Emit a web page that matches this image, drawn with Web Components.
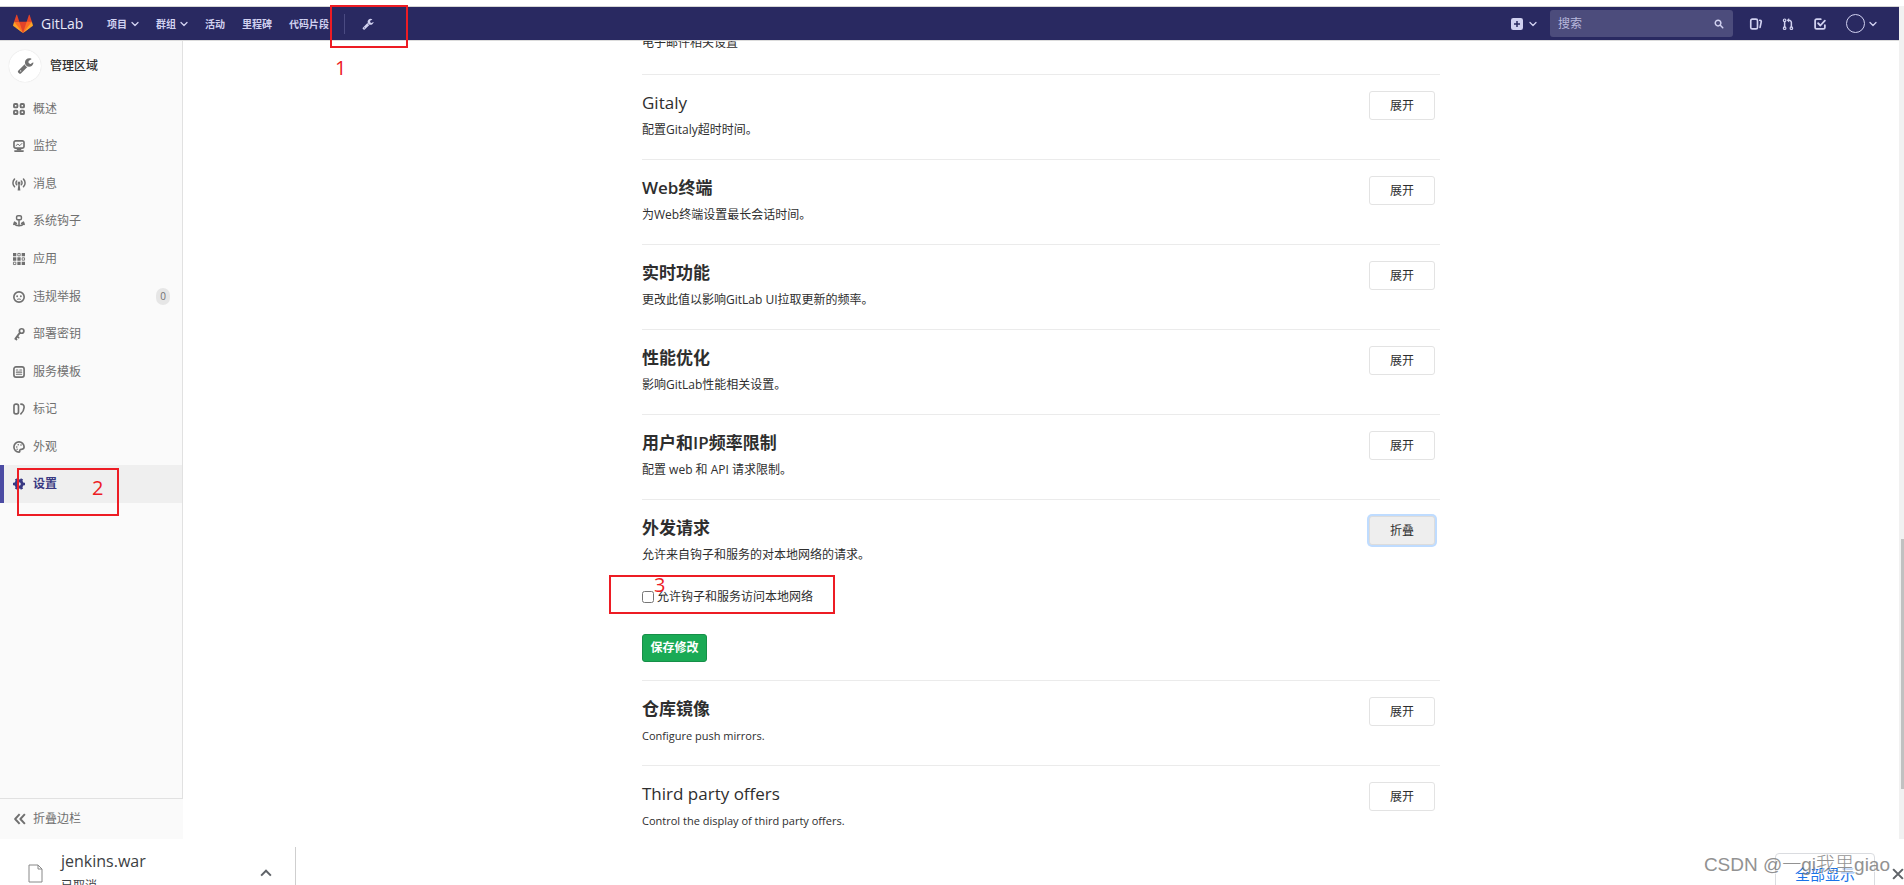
<!DOCTYPE html>
<html lang="zh-CN">
<head>
<meta charset="utf-8">
<title>设置 · 管理区域 · GitLab</title>
<style>
  html, body { height: 100%; margin: 0; }
  body {
    background: #fff;
    color: #2e2e2e;
    font-family: "Open Sans", "Noto Sans CJK SC", sans-serif;
    font-size: 12px;
    line-height: 20px;
  }
</style>
</head>
<body>
<admin-app></admin-app>

<script>
const define = (name, html, setup) => {
  const template = document.createElement('template');
  template.innerHTML = '<style>*,*::before{box-sizing:border-box}button,input{font:inherit;margin:0}a{color:inherit;text-decoration:none}</style>' + html;
  customElements.define(name, class extends HTMLElement {
    constructor() {
      super();
      this.attachShadow({ mode: 'open' }).append(template.content.cloneNode(true));
    }
    connectedCallback() { if (setup) setup(this, this.shadowRoot); }
  });
};

const WRENCH = '<path transform="translate(.6 0) scale(.00893)" d="M384 1472q0-26-19-45t-45-19-45 19-19 45 19 45 45 19 45-19 19-45zm644-420l-682 682q-37 37-90 37-52 0-91-37l-106-108q-38-36-38-90 0-53 38-91l681-681q39 98 114.500 173.500t173.500 114.500zm634-435q0 39-23 106-47 134-164.500 217.500t-258.500 83.500q-185 0-316.500-131.500t-131.500-316.500 131.500-316.500 316.500-131.500q58 0 121.500 16.500t107.500 46.500q16 11 16 28t-16 28l-293 169v224l193 107q5-3 79-48.500t135.500-81 70.500-35.500q15 0 23.500 10t8.500 25z"/>';
const line = (d, w = 2) => `<path fill="none" stroke="currentColor" stroke-width="${w}" stroke-linecap="round" stroke-linejoin="round" d="${d}"/>`;
const ICONS = {
  wrench: WRENCH,
  chevron: line('M2 5l6 6 6-6', 2.6),
  up: line('M1.500 11.500L8 5l6.500 6.500', 2.6).replace('round" stroke-linejoin="round', 'butt" stroke-linejoin="miter'),
  close: line('M1.500 1.500l13 13M14.500 1.500l-13 13', 2.8).replace('stroke-linecap="round"', 'stroke-linecap="butt"'),
  collapse: line('M7.500 1.500L1.500 8l6 6.500M14.500 1.500L8.500 8l6 6.500', 2.6).replace('stroke-linecap="round"', 'stroke-linecap="butt"'),
  plus: '<path fill-rule="evenodd" d="M3 0h10a3 3 0 0 1 3 3v10a3 3 0 0 1-3 3H3a3 3 0 0 1-3-3V3a3 3 0 0 1 3-3zm4 4v3H4v2h3v3h2V9h3V7H9V4z"/>',
  search: line('M11 6.500a4.500 4.500 0 1 1-9 0a4.500 4.500 0 0 1 9 0zM10.500 10.500L14 14', 2.4),
  issues: line('M3 1.500h5a2 2 0 0 1 2 2v9a2 2 0 0 1-2 2H3a2 2 0 0 1-2-2v-9a2 2 0 0 1 2-2zM13 3l.8.2a1.600 1.600 0 0 1 1.200 2l-1.600 7.300', 2.2),
  merge: line('M3.500 5v7M12.500 12V6a3 3 0 0 0-3-3H8.500', 2) + '<path d="M9.500 0v6L6.300 3z"/><g fill="none" stroke="currentColor" stroke-width="1.600"><circle cx="3.500" cy="3" r="1.700"/><circle cx="3.500" cy="13.500" r="1.700"/><circle cx="12.500" cy="13.500" r="1.700"/></g>',
  todo: line('M9 1.500H3.500a2 2 0 0 0-2 2v9a2 2 0 0 0 2 2h9a2 2 0 0 0 2-2V9.500M5.500 7L8.500 10L14.500 3.500', 2.4),
  overview: '<g fill="none" stroke="currentColor" stroke-width="2.500"><rect x="1.300" y="1.300" width="4.600" height="4.600" rx="1.200"/><rect x="10.100" y="1.300" width="4.600" height="4.600" rx="1.200"/><rect x="1.300" y="10.100" width="4.600" height="4.600" rx="1.200"/><rect x="10.100" y="10.100" width="4.600" height="4.600" rx="1.200"/></g>',
  monitor: line('M3.500 1.200h9a2.200 2.200 0 0 1 2.200 2.200v5.200a2.200 2.200 0 0 1-2.200 2.200h-9a2.200 2.200 0 0 1-2.200-2.200V3.400a2.200 2.200 0 0 1 2.200-2.200zM2.500 14.800h11', 2.2) + line('M4 7.500l2.500-2L9 7.500l3-3', 1.300) + '<path d="M5 11h6v3H5z"/>',
  messages: line('M5 4a3.500 3.500 0 0 0 0 5M11 4a3.500 3.500 0 0 1 0 5M2 1.500a7 7 0 0 0 0 10M14 1.500a7 7 0 0 1 0 10', 2) + '<circle cx="8" cy="6.500" r="2"/><path d="M7.200 8h1.600l1 8.500H6.200z"/>',
  hook: line('M8 7v7.500M2 10.500c0 3 3 3.500 6 3.500s6-.5 6-3.500M1 12.500l1-3 2.500 1.800M15 12.500l-1-3-2.500 1.800', 2) + line('M6.500 1h3A1.700 1.700 0 0 1 11.200 2.700v2a1.700 1.700 0 0 1-1.700 1.700h-3A1.700 1.700 0 0 1 4.800 4.700v-2A1.700 1.700 0 0 1 6.500 1z', 2),
  apps: '<path d="M0 0h4.400v4.400H0zM0 5.800h4.400v4.400H0zM5.800 5.800h4.400v4.400H5.800zM5.800 11.600h4.400V16H5.800zM11.600 11.600H16V16h-4.400zM11.600 0H16v4.400h-4.400z"/><g fill="none" stroke="currentColor" stroke-width="1.200"><path d="M6.400.6h3.200v3.200H6.400zM12.200 6.400h3.200v3.200h-3.200zM.6 12.200h3.200v3.200H.6z"/></g>',
  abuse: '<circle cx="8" cy="8" r="6.900" fill="none" stroke="currentColor" stroke-width="2.200"/><circle cx="5.500" cy="7" r="1.200"/><circle cx="10.500" cy="7" r="1.200"/>' + line('M6 11q2-1.200 4 0', 1.300),
  key: line('M14.500 4a3 3 0 1 1-6 0a3 3 0 0 1 6 0zM9 6.500L3 14.500M5.500 11l2 1.800M3.200 14l1.500 1.300', 2.3),
  template: line('M4 1.200h8a2.800 2.800 0 0 1 2.800 2.800v8a2.800 2.800 0 0 1-2.800 2.800H4A2.800 2.800 0 0 1 1.200 12V4A2.800 2.800 0 0 1 4 1.200z', 2.2) + line('M4.500 5.300h2M9 5.300h2.500M4.500 8.200h7M4.500 11h7', 1.500),
  labels: line('M3.800 1.500h1A2.500 2.500 0 0 1 7.300 4v8a2.500 2.500 0 0 1-2.500 2.500h-1A2.500 2.500 0 0 1 1.300 12V4a2.500 2.500 0 0 1 2.500-2.500zM10.500 1.500c3 0 4.500 1.500 4.300 4.500c-.2 3.500-1.600 6-4.300 8.500', 2.2),
  palette: line('M8 1.200a6.800 6.800 0 1 0 0 13.600c1.800 0 .5-2 1.200-3c1-1.500 5.600.5 5.600-3.800A6.800 6.800 0 0 0 8 1.200z', 2.2) + '<circle cx="5" cy="8" r="1.100"/><circle cx="7" cy="5" r="1.100"/><circle cx="10.700" cy="5.300" r="1.100"/><circle cx="5.500" cy="11" r="1"/>',
  gear: '<circle cx="8" cy="8" r="4.300" fill="none" stroke="currentColor" stroke-width="3.800"/><path fill="none" stroke="currentColor" stroke-width="3.400" d="M0 8h3M13 8h3M4 1.100l1.500 2.600M10.500 12.300l1.500 2.600M12 1.100l-1.500 2.600M5.500 12.300L4 14.900"/>'
};

define('ui-icon', `<style>
  :host { display: block; flex: none; width: 12px; height: 12px; }
  svg { display: block; width: 100%; height: 100%; fill: currentColor; overflow: visible; }
</style><svg viewBox="0 0 16 16" aria-hidden="true"></svg>`,
  (el, root) => { root.querySelector('svg').innerHTML = ICONS[el.getAttribute('name')]; });

define('step-frame', `<style>
  :host { position: absolute; z-index: 5; border: 2px solid #ed1c24; pointer-events: none; }
  span { position: absolute; left: var(--num-x); top: var(--num-y); color: #ed1c24; font: 20px/20px "Open Sans", sans-serif; }
</style><span><slot></slot></span>`);

define('top-bar', `<style>
  :host { display: block; position: relative; z-index: 2; flex: none; border-top: 1px solid #d6d6d6; border-bottom: 1px solid #dcdcdc; color: #d1d1f0; }
  header { display: flex; align-items: center; height: 33px; padding: 0 22px 0 13px; background: #292961; }
  .brand { display: flex; align-items: center; gap: 8px; width: 94px; color: #e8e8f8; font-size: 14px; }
  .brand svg { width: 20px; height: 20px; }
  nav, .item, .tools { display: flex; align-items: center; }
  nav { gap: 17px; font-size: 10px; font-weight: 700; white-space: nowrap; }
  .item { gap: 4px; }
  .new { gap: 6px; }
  .small { width: 8px; height: 8px; }
  .admin { margin-left: 15px; padding-left: 17px; border-left: 1px solid #4b4b82; height: 20px; display: flex; align-items: center; }
  .tools { margin-left: auto; gap: 20px; }
  button { border: 0; padding: 0; background: none; color: inherit; }
  .search { display: flex; align-items: center; width: 183px; height: 27px; margin: 0 -3px 0 -7px; padding: 0 9px 0 8px; border-radius: 3px; background: #4c4c7c; }
  input { flex: 1; min-width: 0; border: 0; padding: 0; background: none; color: inherit; outline: 0; }
  input::placeholder { color: #b8b8dc; opacity: 1; }
  .search ui-icon { width: 10px; height: 10px; }
  .face { width: 19px; height: 19px; border: 1px solid #d1d1f0; border-radius: 50%; }
  step-frame { left: 330px; top: -2px; width: 78px; height: 43px; --num-x: 3px; --num-y: 51px; }
</style>
<header>
  <a class="brand" href="#" aria-label="GitLab"><svg viewBox="0 0 36 36" aria-hidden="true"><path fill="#e24329" d="M2 14l9.380 9v-9l-4-12.280c-.205-.632-1.176-.632-1.380 0zM34 14l-9.380 9v-9l4-12.280c.205-.632 1.176-.632 1.380 0zM18 34.380L3 14h30z"/><path fill="#fc6d26" d="M18 34.380L11.380 14H2l4 11zM18 34.380L24.620 14H34l-4 11z"/><path fill="#fca326" d="M2 14L.1 20.160c-.18.565 0 1.200.5 1.560l17.420 12.660zM34 14l1.900 6.160c.18.565 0 1.200-.5 1.560L18 34.380z"/></svg>GitLab</a>
  <nav>
    <a class="item" href="#">项目<ui-icon class="small" name="chevron"></ui-icon></a>
    <a class="item" href="#">群组<ui-icon class="small" name="chevron"></ui-icon></a>
    <a href="#">活动</a><a href="#">里程碑</a><a href="#">代码片段</a>
  </nav>
  <a class="admin" href="#" aria-label="管理区域"><ui-icon name="wrench"></ui-icon></a>
  <div class="tools">
    <button class="item new" aria-label="新建"><ui-icon name="plus"></ui-icon><ui-icon class="small" name="chevron"></ui-icon></button>
    <label class="search"><input type="text" placeholder="搜索" aria-label="搜索"><ui-icon name="search"></ui-icon></label>
    <a href="#" aria-label="议题"><ui-icon name="issues"></ui-icon></a>
    <a href="#" aria-label="合并请求"><ui-icon name="merge"></ui-icon></a>
    <a href="#" aria-label="待办事项"><ui-icon name="todo"></ui-icon></a>
    <button class="item" aria-label="用户菜单"><span class="face"></span><ui-icon class="small" name="chevron"></ui-icon></button>
  </div>
</header>
<step-frame>1</step-frame>`);

define('side-item', `<style>
  :host { display: flex; position: relative; flex: 1; color: #707070; }
  a { display: flex; flex: 1; align-items: center; padding: 0 12px 0 13px; }
  ui-icon { margin-right: 8px; }
  :host([active]) { color: #393982; font-weight: 700; background: #efefef; border-left: 4px solid #4b4ba3; }
  :host([active]) a { padding-left: 9px; }
  .badge { margin-left: auto; min-width: 14px; padding: 0 4px; border-radius: 8px; background: #e6e6e6; font-size: 10px; line-height: 17px; text-align: center; }
</style><a href="#"><ui-icon name="gear"></ui-icon><slot></slot></a><slot name="mark"></slot>`,
  (el, root) => {
    const icon = document.createElement('ui-icon');
    icon.setAttribute('name', el.getAttribute('icon'));
    root.querySelector('ui-icon').replaceWith(icon);
    if (el.hasAttribute('count')) {
      const badge = document.createElement('span');
      badge.className = 'badge';
      badge.textContent = el.getAttribute('count');
      root.querySelector('a').append(badge);
    }
  });

define('side-bar', `<style>
  :host { display: flex; flex-direction: column; flex: none; width: 183px; background: #fafafa; }
  .body { flex: 1; border-right: 1px solid #e1e1e1; }
  .head { display: flex; align-items: center; gap: 9px; height: 49px; padding-left: 9px; font-weight: 500; }
  .disc { display: grid; place-items: center; width: 32px; height: 32px; border-radius: 50%; background: #fff; box-shadow: 0 0 1px #ccc; color: #707070; }
  .disc ui-icon { width: 17px; height: 17px; }
  nav { display: flex; flex-direction: column; height: 413px; }
  button { display: flex; align-items: center; gap: 7px; height: 41px; padding: 0 14px; border: 0; border-top: 1px solid #e1e1e1; background: #fafafa; color: #707070; }
  step-frame { left: 13px; top: 3px; width: 102px; height: 48px; font-weight: 400; --num-x: 73px; --num-y: 8px; }
</style>
<div class="body">
  <a class="head" href="#"><span class="disc"><ui-icon name="wrench"></ui-icon></span>管理区域</a>
  <nav>
    <side-item icon="overview">概述</side-item>
    <side-item icon="monitor">监控</side-item>
    <side-item icon="messages">消息</side-item>
    <side-item icon="hook">系统钩子</side-item>
    <side-item icon="apps">应用</side-item>
    <side-item icon="abuse" count="0">违规举报</side-item>
    <side-item icon="key">部署密钥</side-item>
    <side-item icon="template">服务模板</side-item>
    <side-item icon="labels">标记</side-item>
    <side-item icon="palette">外观</side-item>
    <side-item icon="gear" active>设置<step-frame slot="mark">2</step-frame></side-item>
  </nav>
</div>
<button><ui-icon name="collapse"></ui-icon>折叠边栏</button>`);

define('settings-section', `<style>
  :host { display: block; position: relative; min-height: 85px; padding: 16px 5px 0 0; border-top: 1px solid #ebebeb; }
  .row { display: flex; justify-content: space-between; align-items: flex-start; }
  h4 { margin: 0; font-size: 17px; line-height: 24px; font-weight: 600; }
  p { margin: 5px 0 0; line-height: 20px; }
  h4:lang(en) { font-weight: 500; }
  p:lang(en) { font-size: 11px; }
  button { width: 66px; height: 29px; padding: 0; border: 1px solid #e3e3e3; border-radius: 3px; background: #fff; color: #2e2e2e; }
  :host([open]) button { background: #eee; border-color: #dcdcdc; box-shadow: 0 0 0 2px #bfdcff; }
</style>
<div class="row"><div><h4></h4><p></p></div><button></button></div><slot></slot>`,
  (el, root) => {
    const fill = (tag, text) => {
      const node = root.querySelector(tag);
      node.textContent = text;
      node.lang = /^[\x20-\x7e]+$/.test(text) ? 'en' : 'zh-CN';
    };
    fill('h4', el.getAttribute('heading'));
    fill('p', el.getAttribute('note'));
    fill('button', el.hasAttribute('open') ? '折叠' : '展开');
  });

define('outbound-form', `<style>
  :host { display: block; height: 115px; }
  form { padding-top: 22px; }
  label { display: flex; align-items: center; gap: 3px; }
  input { width: 12px; height: 12px; }
  button { display: block; width: 65px; height: 28px; margin-top: 27px; padding: 0; border: 1px solid #168f48; border-radius: 3px; background: #1aaa55; color: #fff; font-weight: 700; }
  step-frame { left: -33px; top: 75px; width: 226px; height: 39px; --num-x: 43px; --num-y: -2px; }
</style>
<form onsubmit="return false">
  <label><input type="checkbox">允许钩子和服务访问本地网络</label>
  <button>保存修改</button>
</form>
<step-frame>3</step-frame>`);

define('settings-page', `<style>
  :host { display: block; flex: 1; min-width: 0; overflow: hidden; }
  main { max-width: 798px; margin: -8px auto 0; }
  .cut { height: 41px; margin: 0; }
</style>
<main>
  <p class="cut">电子邮件相关设置</p>
  <settings-section heading="Gitaly" note="配置Gitaly超时时间。"></settings-section>
  <settings-section heading="Web终端" note="为Web终端设置最长会话时间。"></settings-section>
  <settings-section heading="实时功能" note="更改此值以影响GitLab UI拉取更新的频率。"></settings-section>
  <settings-section heading="性能优化" note="影响GitLab性能相关设置。"></settings-section>
  <settings-section heading="用户和IP频率限制" note="配置 web 和 API 请求限制。"></settings-section>
  <settings-section open heading="外发请求" note="允许来自钩子和服务的对本地网络的请求。"><outbound-form></outbound-form></settings-section>
  <settings-section heading="仓库镜像" note="Configure push mirrors."></settings-section>
  <settings-section heading="Third party offers" note="Control the display of third party offers."></settings-section>
</main>`);

define('scroll-track', `<style>
  :host { display: block; flex: none; width: 5px; padding-left: 2px; background: #f1f1f1; }
  .before { height: 64%; }
  .thumb { height: 30%; background: #c1c1c1; }
</style><div class="before"></div><div class="thumb"></div>`);

define('download-shelf', `<style>
  :host { display: flex; position: relative; flex: none; height: 46px; overflow: hidden; background: #fff; color: #3c4043; }
  .file { display: flex; width: 296px; height: 38px; margin-top: 8px; padding: 0 23px 0 28px; border-right: 1px solid #cfcfcf; }
  .doc { width: 15px; height: 19px; margin: 17px 18px 0 0; }
  .name { font-size: 16px; line-height: 24px; margin-top: 2px; }
  .state { line-height: 20px; margin-top: 3px; }
  .more { align-self: flex-start; margin: 20px 0 0 auto; }
  button { border: 0; padding: 0; background: none; color: #5f6368; }
  .all { width: 100px; height: 42px; margin: 14px 17px 0 auto; border: 1px solid #dadce0; border-radius: 4px; color: #1a73e8; font-size: 15px; line-height: 22px; }
  .x { align-self: flex-start; margin-top: 29px; }
  .sign { position: absolute; right: 14px; top: 13px; color: #777; opacity: .8; font: 19px/26px "Liberation Sans", "Noto Sans CJK SC", sans-serif; font-weight: 300; text-shadow: 1px 1px 0 #fff; }
</style>
<div class="file">
  <svg class="doc" viewBox="0 0 15 19" aria-hidden="true"><path d="M1 1h9l4 4v13H1zM10 1v4h4" fill="#fff" stroke="#888"/></svg>
  <div><div class="name">jenkins.war</div><div class="state">已取消</div></div>
  <button class="more" aria-label="更多"><ui-icon name="up"></ui-icon></button>
</div>
<button class="all">全部显示</button>
<button class="x" aria-label="关闭"><ui-icon name="close"></ui-icon></button>
<span class="sign">CSDN @一gi我里giao</span>`);

define('admin-app', `<style>
  :host { display: flex; flex-direction: column; height: 100vh; padding-top: 6px; box-sizing: border-box; overflow: hidden; }
  .view { display: flex; flex: 1; min-height: 0; }
  .page { display: flex; flex-direction: column; flex: 1; min-width: 0; }
  .columns { display: flex; flex: 1; min-height: 0; }
</style>
<div class="view">
  <div class="page"><top-bar></top-bar><div class="columns"><side-bar></side-bar><settings-page></settings-page></div></div>
  <scroll-track></scroll-track>
</div>
<download-shelf></download-shelf>`);
</script>
</body>
</html>
